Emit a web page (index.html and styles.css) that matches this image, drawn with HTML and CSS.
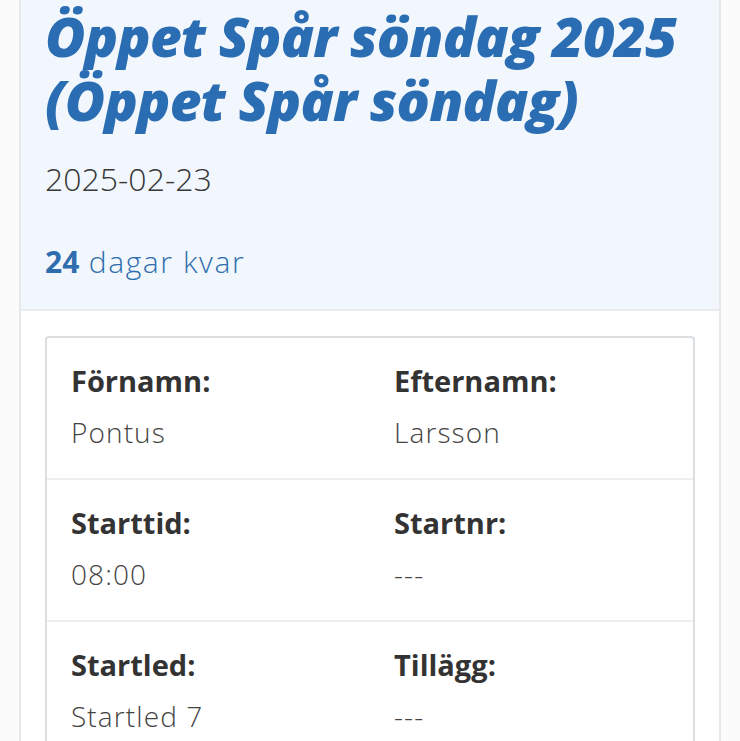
FILE: index.html
```html
<!DOCTYPE html>
<html lang="sv">
<head>
<meta charset="utf-8">
<link rel="stylesheet" href="styles.css">
</head>
<body>
<div class="page">
  <div class="entry">
    <header class="entry-head">
      <h1 class="title">Öppet Spår söndag 2025 (Öppet Spår söndag)</h1>
      <div class="date">2025-02-23</div>
      <div class="countdown"><strong>24</strong> dagar kvar</div>
    </header>
    <div class="entry-body">
      <div class="info">
        <div class="row">
          <div class="cell"><div class="label">Förnamn:</div><div class="value">Pontus</div></div>
          <div class="cell"><div class="label">Efternamn:</div><div class="value">Larsson</div></div>
        </div>
        <div class="row">
          <div class="cell"><div class="label">Starttid:</div><div class="value">08:00</div></div>
          <div class="cell"><div class="label">Startnr:</div><div class="value">---</div></div>
        </div>
        <div class="row">
          <div class="cell"><div class="label">Startled:</div><div class="value">Startled 7</div></div>
          <div class="cell"><div class="label">Tillägg:</div><div class="value">---</div></div>
        </div>
      </div>
    </div>
  </div>
</div>
</body>
</html>
```
FILE: styles.css
```css
html, body {
  margin: 0;
  padding: 0;
  background: #fbfbfc;
}
body {
  font-family: "Open Sans", Lato, sans-serif;
  color: #333;
}
.page {
  padding: 0 19px;
  height: 741px;
  overflow: hidden;
}
.entry {
  border-left: 2px solid #e6e8ea;
  border-right: 2px solid #e6e8ea;
  background: #fff;
  min-height: 800px;
}
.entry-head {
  background: #f1f7fc;
  border-bottom: 2px solid #e8ecef;
  padding: 0 24px;
  height: 311px;
  box-sizing: border-box;
}
.title {
  margin: 0;
  padding-top: 4px;
  font-family: "Open Sans", sans-serif;
  font-weight: 800;
  font-style: italic;
  font-size: 55px;
  line-height: 64px;
  letter-spacing: -0.8px;
  color: #2b6db3;
}
.date {
  margin-top: 27px;
  font-size: 32px;
  font-weight: 300;
  line-height: 40px;
  color: #383838;
}
.countdown {
  margin-top: 43px;
  font-size: 30px;
  font-weight: 300;
  line-height: 40px;
  letter-spacing: 1.6px;
  color: #2f6eae;
}
.countdown strong {
  font-weight: 700;
  letter-spacing: 0;
}
.entry-body {
  padding: 25px 24px 0;
}
.info {
  border: 2px solid #dcdfe2;
  border-radius: 4px;
  border-bottom: none;
}
.row {
  display: grid;
  grid-template-columns: 1fr 1fr;
  padding-top: 25px;
  border-bottom: 2px solid #eceef0;
  height: 142px;
  box-sizing: border-box;
}
.cell {
  padding: 0 24px;
}
.label {
  font-size: 29px;
  font-weight: 700;
  line-height: 36px;
  color: #333;
}
.value {
  margin-top: 15px;
  font-size: 28px;
  font-weight: 300;
  line-height: 36px;
  letter-spacing: 1.1px;
  color: #444;
}
```
